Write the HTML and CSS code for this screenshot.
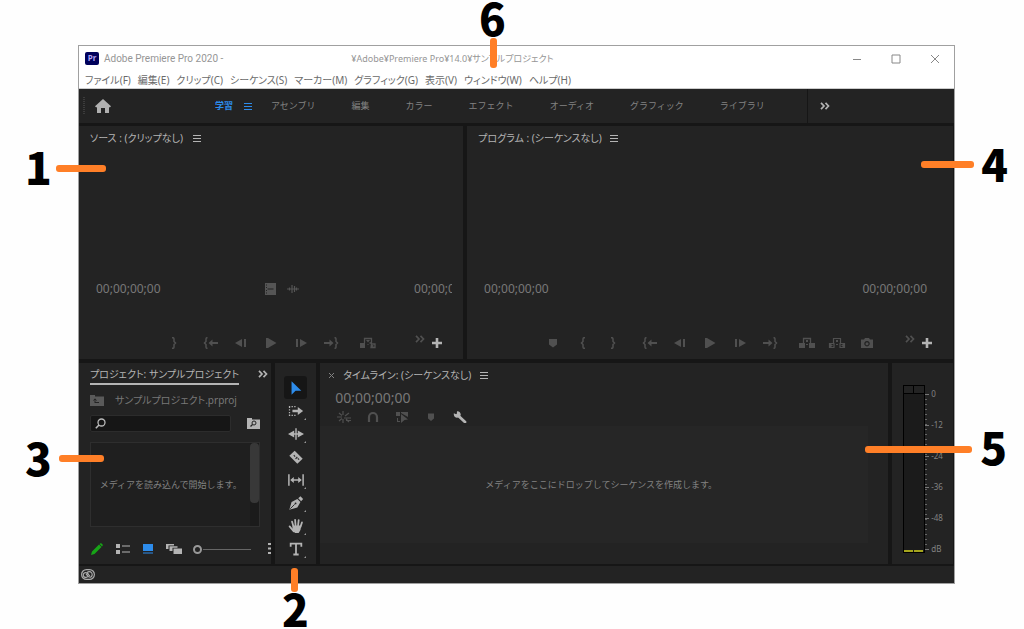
FILE: index.html
```html
<!DOCTYPE html>
<html lang="ja">
<head>
<meta charset="utf-8">
<title>Adobe Premiere Pro 2020</title>
<link rel="stylesheet" href="styles.css">
</head>
<body>
<svg class="defs" aria-hidden="true">
  <symbol id="menu" viewBox="0 0 8 8"><path d="M0 1.5h8M0 4.5h8M0 7.5h8" stroke="currentColor"/></symbol>
  <symbol id="more" viewBox="0 0 10 8"><path d="M1 .8 4 4 1 7.2M5.5 .8l3 3.2-3 3.2" fill="none" stroke="currentColor" stroke-width="1.7"/></symbol>
  <symbol id="plus" viewBox="0 0 10 10"><path d="M5 0v10M0 5h10" stroke="currentColor" stroke-width="2.6"/></symbol>
  <symbol id="brace-open" viewBox="0 0 16 12"><path d="M10 .7H9Q8 .7 8 2v2.5L6.500 6 8 7.500V10q0 1.300 1 1.300h1" fill="none" stroke="currentColor" stroke-width="1.500"/></symbol>
  <symbol id="brace-close" viewBox="0 0 16 12"><path d="M6 .7h1Q8 .7 8 2v2.500L9.500 6 8 7.500V10q0 1.300-1 1.300H6" fill="none" stroke="currentColor" stroke-width="1.500"/></symbol>
  <symbol id="go-in" viewBox="0 0 16 12"><path d="M4.500 .7h-.5Q3 .7 3 2v2.500L1.500 6 3 7.500V10q0 1.300 1 1.300h.5" fill="none" stroke="currentColor" stroke-width="1.500"/><path d="m5.500 6 4-3.500V5H15v2H9.500v2.500z" fill="currentColor"/></symbol>
  <symbol id="go-out" viewBox="0 0 16 12"><path d="M11.500 .7h.5q1 0 1 1.300v2.500L14.500 6 13 7.500V10q0 1.300-1 1.300h-.5" fill="none" stroke="currentColor" stroke-width="1.500"/><path d="m10.500 6-4-3.500V5H1v2h5.500v2.500z" fill="currentColor"/></symbol>
  <symbol id="step-back" viewBox="0 0 16 12"><path d="M2 6l7-4v8zM11 2h2v8h-2z" fill="currentColor"/></symbol>
  <symbol id="step-fwd" viewBox="0 0 16 12"><path d="M14 6 7 2v8zM3 2h2v8H3z" fill="currentColor"/></symbol>
  <symbol id="play" viewBox="0 0 16 12"><path d="M3 1h2l8.500 5L5 11H3z" fill="currentColor"/></symbol>
  <symbol id="marker" viewBox="0 0 16 12"><path d="M4 2h8v5.500L8 10.500 4 7.500z" fill="currentColor"/></symbol>
  <symbol id="insert" viewBox="0 0 18 12"><path d="M1 6h5v5H1z" fill="currentColor"/><path d="M5.500 6V1.500h7V6h-2M12.500 7h3.500v3.500h-4z" fill="none" stroke="currentColor" stroke-width="1.300"/><path d="M7 3h4L9 5.500zM8.500 7h1v1h-1zM12 7l3 2-3 2z" fill="currentColor"/></symbol>
  <symbol id="lift" viewBox="0 0 18 12"><path d="M1 6h6v5H1zM11 6h6v5h-6zM8 3h2v2H8zM8 7h2v1H8z" fill="currentColor"/><path d="M5.500 6V1.500h7V6" fill="none" stroke="currentColor" stroke-width="1.300"/></symbol>
  <symbol id="extract" viewBox="0 0 18 12"><path d="M1.500 6.500h4.500v4H1.500zM12 6.500h4.500v4H12zM5.500 6V1.500h7V6" fill="none" stroke="currentColor" stroke-width="1.200"/><path d="m2 6.500 3 2-3 2zM16 6.500l-3 2 3 2zM8 3h2v2H8zM8 7h2v1H8z" fill="currentColor"/></symbol>
  <symbol id="camera" viewBox="0 0 16 12"><path fill-rule="evenodd" d="M2 2.500h3L6 1h4l1 1.500h3V11H2zM8 4a2.700 2.700 0 1 0 .01 0z" fill="currentColor"/><circle cx="8" cy="6.700" r="1.500" fill="currentColor"/></symbol>
</svg>

<main class="figure">
  <section class="window" aria-label="Adobe Premiere Pro">
    <header class="titlebar">
      <span class="logo">Pr</span>
      <span class="app-name">Adobe Premiere Pro 2020 -</span>
      <span class="file-path">¥Adobe¥Premiere Pro¥14.0¥サンプルプロジェクト</span>
      <div class="caption-buttons">
        <button aria-label="最小化"><svg viewBox="0 0 10 10"><path d="M1 5.500h8"/></svg></button>
        <button aria-label="最大化"><svg viewBox="0 0 10 10"><path d="M1 1h8v8H1z"/></svg></button>
        <button aria-label="閉じる"><svg viewBox="0 0 10 10"><path d="m1 1 8 8M9 1 1 9"/></svg></button>
      </div>
    </header>
    <nav class="menubar" aria-label="メニュー">
      <button>ファイル(F)</button><button>編集(E)</button><button>クリップ(C)</button><button>シーケンス(S)</button><button>マーカー(M)</button><button>グラフィック(G)</button><button>表示(V)</button><button>ウィンドウ(W)</button><button>ヘルプ(H)</button>
    </nav>

    <div class="workspaces">
      <span class="grip"></span>
      <button class="home" aria-label="ホーム"><svg width="16" height="14" viewBox="0 0 16 14"><path d="M8 0 0 7.300 1.200 8.500 2 7.900V14h4V9h4v5h4V7.900l.8.6L16 7.300z" fill="currentColor"/></svg></button>
      <nav class="workspace-tabs" aria-label="ワークスペース">
        <button class="active">学習 <svg width="8" height="8"><use href="#menu"/></svg></button>
        <button>アセンブリ</button><button>編集</button><button>カラー</button><button>エフェクト</button><button>オーディオ</button><button>グラフィック</button><button>ライブラリ</button>
      </nav>
      <button class="overflow" aria-label="その他"><svg width="10" height="8"><use href="#more"/></svg></button>
    </div>

    <div class="row row-top">
      <section class="panel source">
        <h2 class="panel-title">ソース : (クリップなし) <svg width="8" height="8"><use href="#menu"/></svg></h2>
        <div class="timebar">
          <span>00;00;00;00</span>
          <span class="drag-icons">
            <svg width="11" height="12" viewBox="0 0 11 12"><path fill-rule="evenodd" d="M0 0h11v12H0zM2.500 5.500v1h6v-1zM1 1.500v1h1v-1zM1 4v1h1V4zM1 7v1h1V7zM1 9.500v1h1v-1z" fill="currentColor"/></svg>
            <svg width="12" height="10" viewBox="0 0 12 10"><path d="M0 5h12M2.500 3.500v3M5 1v8M7.500 2v6M9.500 3.500v3" stroke="currentColor" stroke-width="1.200"/></svg>
          </span>
          <span class="duration">00;00;00;00</span>
        </div>
        <div class="transport">
          <div><button aria-label="アウトをマーク"><svg><use href="#brace-close"/></svg></button></div>
          <div>
            <button aria-label="インへ移動"><svg><use href="#go-in"/></svg></button>
            <button aria-label="1フレーム前へ"><svg><use href="#step-back"/></svg></button>
            <button aria-label="再生"><svg><use href="#play"/></svg></button>
            <button aria-label="1フレーム先へ"><svg><use href="#step-fwd"/></svg></button>
            <button aria-label="アウトへ移動"><svg><use href="#go-out"/></svg></button>
          </div>
          <div><button aria-label="インサート"><svg><use href="#insert"/></svg></button></div>
          <button class="chevrons" aria-label="その他"><svg><use href="#more"/></svg></button>
          <button class="add" aria-label="ボタンエディター"><svg><use href="#plus"/></svg></button>
        </div>
      </section>

      <section class="panel program">
        <h2 class="panel-title">プログラム : (シーケンスなし) <svg width="8" height="8"><use href="#menu"/></svg></h2>
        <div class="timebar">
          <span>00;00;00;00</span>
          <span>00;00;00;00</span>
        </div>
        <div class="transport">
          <div>
            <button aria-label="マーカーを追加"><svg><use href="#marker"/></svg></button>
            <button aria-label="インをマーク"><svg><use href="#brace-open"/></svg></button>
            <button aria-label="アウトをマーク"><svg><use href="#brace-close"/></svg></button>
          </div>
          <div>
            <button aria-label="インへ移動"><svg><use href="#go-in"/></svg></button>
            <button aria-label="1フレーム前へ"><svg><use href="#step-back"/></svg></button>
            <button aria-label="再生"><svg><use href="#play"/></svg></button>
            <button aria-label="1フレーム先へ"><svg><use href="#step-fwd"/></svg></button>
            <button aria-label="アウトへ移動"><svg><use href="#go-out"/></svg></button>
          </div>
          <div>
            <button aria-label="リフト"><svg><use href="#lift"/></svg></button>
            <button aria-label="抽出"><svg><use href="#extract"/></svg></button>
            <button aria-label="フレームを書き出し"><svg><use href="#camera"/></svg></button>
          </div>
          <button class="chevrons" aria-label="その他"><svg><use href="#more"/></svg></button>
          <button class="add" aria-label="ボタンエディター"><svg><use href="#plus"/></svg></button>
        </div>
      </section>
    </div>

    <div class="row row-bottom">
      <section class="panel project">
        <header class="project-head">
          <h2>プロジェクト: サンプルプロジェクト</h2>
          <button aria-label="その他"><svg width="10" height="8"><use href="#more"/></svg></button>
        </header>
        <p class="project-file">
          <svg width="14" height="11" viewBox="0 0 14 11"><path d="M0 0h5v1.500h9V11H0z" fill="#5a5a5a"/><path d="M5 7.500h4M5 8V4M3.500 5.500 5 3.800l1.500 1.700" fill="none" stroke="#232323"/></svg>
          サンプルプロジェクト.prproj
        </p>
        <div class="search-row">
          <label class="search">
            <svg width="11" height="11" viewBox="0 0 11 11"><circle cx="6.500" cy="4.500" r="3.500" fill="none" stroke="#bbb" stroke-width="1.300"/><path d="M4 7 .8 10.200" stroke="#bbb" stroke-width="1.600"/></svg>
            <input type="text" aria-label="検索">
          </label>
          <button aria-label="検索ビン"><svg width="13" height="11" viewBox="0 0 13 11"><path d="M0 0h5v1.500h8V11H0z" fill="#b4b4b4"/><circle cx="7" cy="5" r="2" fill="none" stroke="#232323"/><path d="M5.500 6.500 3.500 8.500" stroke="#232323" stroke-width="1.200"/></svg></button>
        </div>
        <div class="bin"><p>メディアを読み込んで開始します。</p><span class="scrollbar"></span></div>
        <footer class="project-tools">
          <button aria-label="書き込み可"><svg width="12" height="12" viewBox="0 0 12 12"><path d="M0 12 1 8.500 8 1.500 10.500 4 3.500 11zM8.500 1 10 0l2 2-1 1.500z" fill="#17a417"/></svg></button>
          <button aria-label="リスト表示"><svg width="14" height="10" viewBox="0 0 14 10"><path d="M0 0h4v4H0zM0 6h4v4H0zM6 1.500h8v1H6zM6 7.500h8v1H6z" fill="#b4b4b4"/></svg></button>
          <button aria-label="アイコン表示"><svg width="10" height="10" viewBox="0 0 10 10"><path d="M0 0h10v7H0zM0 8.500h10v1H0z" fill="#2d8ceb"/></svg></button>
          <button aria-label="フリーフォーム表示"><svg width="16" height="10" viewBox="0 0 16 10"><path d="M0 0h8v1.500H2.500V5H0zM3.500 2.300h8v1.500h-5v3.200h-3zM7.500 4.500H16V10H7.500z" fill="#b4b4b4"/></svg></button>
          <input type="range" min="0" max="100" value="0" aria-label="ズーム">
          <button aria-label="オプション"><svg width="3" height="12" viewBox="0 0 3 12"><path d="M0 0h3v2H0zM0 4.500h3v2H0zM0 9h3v2H0z" fill="#b4b4b4"/></svg></button>
        </footer>
      </section>

      <nav class="panel tools" aria-label="ツール">
        <button class="selected" aria-label="選択"><svg viewBox="0 0 18 18"><path d="M4 1.500v15l4.500-4.500H15z" fill="#2d8ceb"/></svg></button>
        <button class="flyout" aria-label="トラックの前方選択"><svg viewBox="0 0 18 18"><path d="M1 4h9M1 14h9M1.700 4v10" fill="none" stroke="currentColor" stroke-width="1.400" stroke-dasharray="1.500 1.500"/><path d="M5 7.500h6V4.500l6 4.500-6 4.500v-3H5z" fill="currentColor"/></svg></button>
        <button class="flyout" aria-label="リップル"><svg viewBox="0 0 18 18"><path d="M9 2.500v13M3 9h12" stroke="currentColor" stroke-width="1.600"/><path d="m0 9 7-4v8zM18 9l-7-4v8z" fill="currentColor"/></svg></button>
        <button aria-label="レーザー"><svg viewBox="0 0 18 18"><path d="M7.500 2 1.500 7.500l9 9L16.500 11z" fill="currentColor"/><path d="m6.500 7 1.500 1.500M8.500 11l2-2M11 10.500l1.500 1.500" stroke="#232323" stroke-width="1.200"/></svg></button>
        <button class="flyout" aria-label="スリップ"><svg viewBox="0 0 18 18"><path d="M1 2.500v13M17 2.500v13M5 9h8" stroke="currentColor" stroke-width="1.700"/><path d="m2.500 9 4-3.500v7zM15.500 9l-4-3.500v7z" fill="currentColor"/></svg></button>
        <button class="flyout" aria-label="ペン"><svg viewBox="0 0 18 18"><path d="M1.500 16.500 4 8l6.500-3.500 3.500 3.500-3.500 6z" fill="currentColor"/><path d="m11.500 3.700 2.500-2.200 3 3L14.800 7z" fill="currentColor"/><path d="m2.500 15.500 5-5" stroke="#232323"/><circle cx="8.500" cy="9.500" r="1" fill="#232323"/></svg></button>
        <button class="flyout" aria-label="手のひら"><svg viewBox="0 0 18 18"><path d="M6.500 15 1.800 9.500M6 9 4.500 4M8.500 8.500 8 2M11.300 8.500 12 2.500M14 10l1.700-5" fill="none" stroke="currentColor" stroke-width="2" stroke-linecap="round"/><path d="M5 8.500h10l-1 5-2 3.500H8l-3-3z" fill="currentColor"/></svg></button>
        <button class="flyout" aria-label="文字"><svg viewBox="0 0 18 18"><path d="M3 6.500V3h12v3.500M9 3v12.500M6 15.200h6" fill="none" stroke="currentColor" stroke-width="2"/></svg></button>
      </nav>

      <section class="panel timeline">
        <header class="timeline-head">
          <button aria-label="閉じる"><svg width="5" height="5" viewBox="0 0 5 5"><path d="m0 0 5 5M5 0 0 5" stroke="currentColor"/></svg></button>
          <h2>タイムライン: (シーケンスなし)</h2>
          <svg width="8" height="8"><use href="#menu"/></svg>
        </header>
        <div class="timeline-time">00;00;00;00</div>
        <div class="timeline-tools">
          <button aria-label="ネスト"><svg viewBox="0 0 14 12"><path d="M6 0v4M2 2l3 2.500M0 6h5M12 2 8 5M7 7h7M2 10l3-2.500M6 8v4M9 8l3 3M9 9.500h5" stroke="currentColor" stroke-width="1.200"/></svg></button>
          <button aria-label="スナップ"><svg viewBox="0 0 14 12"><path d="M3 11V6a4 4 0 0 1 8 0v5" fill="none" stroke="currentColor" stroke-width="2.200"/></svg></button>
          <button aria-label="リンクされた選択"><svg viewBox="0 0 14 12"><path d="M1 1h4v4H1zM6 1h7v5L6 2zM1 7h1v4h3v-1H3V7zM6 3l7 5.500-3.500.5L6 12z" fill="currentColor"/></svg></button>
          <button aria-label="マーカー"><svg viewBox="0 0 14 12"><path d="M4 2.500h6v5L7 10 4 7.500z" fill="currentColor"/></svg></button>
          <button class="on" aria-label="設定"><svg viewBox="0 0 14 12"><path d="M4.500 4 12 11" stroke="currentColor" stroke-width="2.800" stroke-linecap="round"/><path d="M.8 2.200 3.800 3.600 4 .2Q7.600 0 7.800 4 6 7.500 3 6.500.5 5.500.8 2.200z" fill="currentColor"/></svg></button>
        </div>
        <div class="drop-zone"><p>メディアをここにドロップしてシーケンスを作成します。</p></div>
      </section>

      <section class="panel meters" aria-label="オーディオメーター">
        <div class="meter"><span class="peak"></span><span class="peak"></span><span class="level"></span><span class="level"></span></div>
        <div class="ticks"></div>
        <ul class="scale"><li>0</li><li>-12</li><li>-24</li><li>-36</li><li>-48</li><li>dB</li></ul>
      </section>
    </div>

    <footer class="statusbar"><svg width="14" height="11" viewBox="0 0 14 11"><rect x=".6" y=".6" width="12.800" height="9.800" rx="4.900" fill="none" stroke="#aaa" stroke-width="1.200"/><path d="M7 7.500 5.500 8.300a2.400 2.400 0 1 1 0-4.500Q7 4.200 8 6l.8 1.200M6 3.800a2.900 2.900 0 1 1 3.500 4.400Q8 8.500 6.500 6.500L5 5" fill="none" stroke="#aaa" stroke-width="1.200"/></svg></footer>
  </section>

  <b class="number n1">1</b><i class="pointer p1"></i>
  <b class="number n2">2</b><i class="pointer p2"></i>
  <b class="number n3">3</b><i class="pointer p3"></i>
  <b class="number n4">4</b><i class="pointer p4"></i>
  <b class="number n5">5</b><i class="pointer p5"></i>
  <b class="number n6">6</b><i class="pointer p6"></i>
</main>
</body>
</html>
```
FILE: styles.css
```css
* { box-sizing: border-box; }

body {
  margin: 0;
  background: #fefefe;
  color: #b4b4b4;
  font: 10px/16px "Noto Sans", "Noto Sans CJK JP", sans-serif;
}

.defs { position: absolute; width: 0; height: 0; }
h2, p, ul { margin: 0; padding: 0; font-size: inherit; font-weight: 400; }
ul { list-style: none; }
svg { display: block; flex: none; }
button {
  display: flex;
  flex: none;
  align-items: center;
  justify-content: center;
  padding: 0;
  border: 0;
  background: none;
  color: inherit;
  font: inherit;
  white-space: nowrap;
}

.figure {
  position: relative;
  display: flex;
  min-height: 100vh;
  padding: 45px 69px 45px 78px;
}

.window {
  flex: 1;
  min-width: 0;
  display: flex;
  flex-direction: column;
  border: 1px solid #a0a0a0;
  background: #161616;
}

/* Title and menus */
.titlebar {
  display: flex;
  align-items: center;
  height: 25px;
  padding-left: 6px;
  background: #fff;
  color: #969696;
}
.logo {
  width: 14px;
  height: 13px;
  border-radius: 2px;
  background: #00005b;
  color: #b4a5f5;
  font-size: 8px;
  line-height: 12px;
  font-weight: 700;
  text-align: center;
}
.app-name { margin-left: 5px; font-family: Roboto, sans-serif; }
.file-path { margin-left: 128px; font-size: 9px; font-feature-settings: "palt"; white-space: nowrap; }
.caption-buttons { display: flex; margin-left: auto; }
.caption-buttons button { width: 39px; height: 24px; }
.caption-buttons svg { width: 10px; height: 10px; fill: none; stroke: #888; }

.menubar {
  display: flex;
  gap: 7px;
  height: 18px;
  padding-left: 6px;
  border-bottom: 1px solid #ccc;
  background: #fff;
  color: #6a6a6a;
}
.menubar button { font-feature-settings: "palt"; }

/* Workspace bar */
.workspaces {
  display: flex;
  align-items: center;
  height: 34px;
  margin-bottom: 3px;
  background: #232323;
  color: #828282;
  font-size: 9px;
}
.grip { width: 2px; height: 18px; margin-left: 4px; background: repeating-linear-gradient(#3c3c3c 0 1px, transparent 1px 2px); }
.home { width: 36px; color: #b0b0b0; }
.workspace-tabs { display: flex; flex: 1; gap: 36px; margin-left: 94px; }
.workspace-tabs .active { gap: 11px; margin-right: -17px; color: #2d8ceb; font-weight: 700; }
.overflow { width: 147px; height: 34px; padding-left: 12px; justify-content: flex-start; border-left: 1px solid #161616; color: #b4b4b4; }

/* Panels */
.row { display: flex; gap: 4px; padding-right: 1px; }
.row-top { flex: 233 1 233px; }
.row-bottom { flex: 201 1 201px; margin-top: 4px; }
.panel { min-width: 0; background: #232323; }
.source { flex: 385 1 385px; }
.program { flex: 487 1 487px; }
.source, .program { display: flex; flex-direction: column; }
.panel-title {
  display: flex;
  align-items: center;
  gap: 10px;
  padding: 4px 11px;
  font-feature-settings: "palt";
}
.program .panel-title { gap: 8px; }
.timebar {
  display: flex;
  align-items: center;
  justify-content: space-between;
  margin: auto 26px 32px 17px;
  color: #787878;
  font-size: 12px;
}
.source .timebar { margin-right: 11px; }
.drag-icons { display: flex; align-items: center; gap: 11px; margin-right: 10px; color: #555; }
.duration { width: 38px; overflow: hidden; }
.transport {
  display: flex;
  align-items: center;
  justify-content: flex-end;
  gap: 7px;
  padding: 0 17px 2px 0;
  color: #505050;
}
.transport div { display: flex; }
.transport button { width: 30px; height: 20px; }
.transport svg { width: 18px; height: 12px; }
.transport .chevrons { width: 17px; margin: 0 -7px 8px 12px; }
.source .chevrons { margin-left: 21px; }
.transport .chevrons svg { width: 10px; height: 8px; }
.transport .add { width: 18px; height: 22px; color: #b4b4b4; }
.transport .add svg { width: 10px; height: 10px; }

/* Project */
.project { flex: 193 1 193px; display: flex; flex-direction: column; padding: 0 11px 8px 11px; }
.project-head { display: flex; align-items: flex-start; justify-content: space-between; margin-right: -12px; }
.project-head h2 {
  padding: 3px 0 1px;
  border-bottom: 2px solid #b4b4b4;
  white-space: nowrap;
  font-feature-settings: "palt";
}
.project-head button { width: 18px; height: 22px; }
.project-file { display: flex; align-items: center; gap: 11px; margin-top: 7px; color: #787878; white-space: nowrap; font-feature-settings: "palt"; }
.search-row { display: flex; justify-content: space-between; align-items: center; margin-top: 7px; gap: 16px; }
.search {
  flex: 1;
  min-width: 0;
  display: flex;
  align-items: center;
  height: 17px;
  padding: 0 4px;
  border: 1px solid #2c2c2c;
  border-radius: 2px;
  background: #161616;
}
.search input { flex: 1; min-width: 0; height: 14px; border: 0; padding: 0 4px; background: none; color: inherit; font: inherit; outline: 0; }
.bin { flex: 1; display: flex; align-items: center; margin-top: 10px; border: 1px solid #2e2e2e; background: #1f1f1f; color: #828282; font-size: 9px; white-space: nowrap; }
.bin p { flex: 1; text-align: center; }
.scrollbar { align-self: stretch; width: 9px; background: #1b1b1b; }
.scrollbar::before { content: ""; display: block; height: 60px; border-radius: 4px; background: #383838; }
.project-tools { display: flex; align-items: center; gap: 13px; height: 14px; margin: 15px -11px 0 1px; }
.project-tools input { appearance: none; flex: 1; min-width: 0; height: 10px; margin: 0 4px 0 -2px; background: linear-gradient(#666, #666) 10px 5px / 100% 1px no-repeat; }
.project-tools input::-webkit-slider-thumb { appearance: none; width: 9px; height: 9px; border: 2px solid #999; border-radius: 50%; background: #232323; }

/* Tools */
.tools { flex: 41 1 41px; display: flex; flex-direction: column; align-items: center; padding-top: 13px; color: #b4b4b4; }
.tools button { position: relative; width: 23px; height: 23px; border-radius: 3px; }
.tools svg { width: 16px; height: 16px; }
.tools .selected { background: #161616; }
.flyout::after {
  content: "";
  position: absolute;
  right: 1px;
  bottom: 2px;
  border: 1px solid #999;
  border-top-color: transparent;
  border-left-color: transparent;
}

/* Timeline */
.timeline { flex: 570 1 570px; display: flex; flex-direction: column; }
.timeline-head { display: flex; align-items: center; gap: 9px; padding: 4px 9px 0; font-feature-settings: "palt"; }
.timeline-head button { color: #828282; }
.timeline-time { margin: 5px 15px 0; color: #787878; font-size: 14px; line-height: 20px; }
.timeline-tools { display: flex; gap: 15px; padding: 3px 17px; color: #505050; }
.timeline-tools svg { width: 14px; height: 12px; }
.timeline-tools .on { color: #b4b4b4; }
.drop-zone { flex: 1; display: flex; align-items: center; justify-content: center; margin: 0 20px 21px 0; background: #262626; color: #828282; font-size: 9px; padding-left: 14px; }

/* Audio meters */
.meters { flex: 61 1 61px; display: flex; align-items: flex-start; padding-top: 22px; }
.meter {
  display: grid;
  grid-template: 8px 1fr / 1fr 1fr;
  width: 22px;
  height: 168px;
  margin-left: 11px;
  border: 1px solid #000;
  background: #1b1b1b;
}
.peak { border-bottom: 1px solid #000; background: #232323; }
.peak:first-child { border-right: 1px solid #000; }
.level { align-self: end; height: 2px; margin-right: 1px; background: #a5a51e; }
.ticks {
  width: 4px;
  height: 157px;
  margin-top: 9px;
  background:
    repeating-linear-gradient(#777 0 1px, transparent 1px 31px) 0 0 / 4px 100% no-repeat,
    repeating-linear-gradient(#666 0 1px, transparent 1px 5px) 0 0 / 2px 100% no-repeat;
}
.scale { margin: -7px 0 0 2px; color: #828282; font-size: 8px; line-height: 31px; }

.statusbar { display: flex; align-items: center; height: 17px; margin-top: 2px; padding-left: 2px; background: #232323; }

/* Callouts over the window */
.number {
  position: absolute;
  color: #000;
  font: 900 44px/36px "Noto Sans CJK JP", sans-serif;
}
.pointer { position: absolute; width: 50px; height: 7px; border-radius: 3px; background: #ff7f27; }
.n1 { left: 25px; top: 148px; }
.p1 { left: 56px; top: 165px; }
.n2 { left: 282px; top: 590px; }
.p2 { left: 291px; top: 568px; width: 7px; height: 24px; }
.n3 { left: 25px; top: 439px; }
.p3 { left: 59px; top: 455px; width: 45px; }
.n4 { right: 16px; top: 145px; }
.p4 { right: 50px; top: 161px; width: 53px; }
.n5 { right: 17px; top: 428px; }
.p5 { right: 52px; top: 446px; width: 107px; }
.n6 { left: 479px; top: -1px; }
.p6 { left: 490px; top: 38px; width: 7px; height: 30px; }
```
